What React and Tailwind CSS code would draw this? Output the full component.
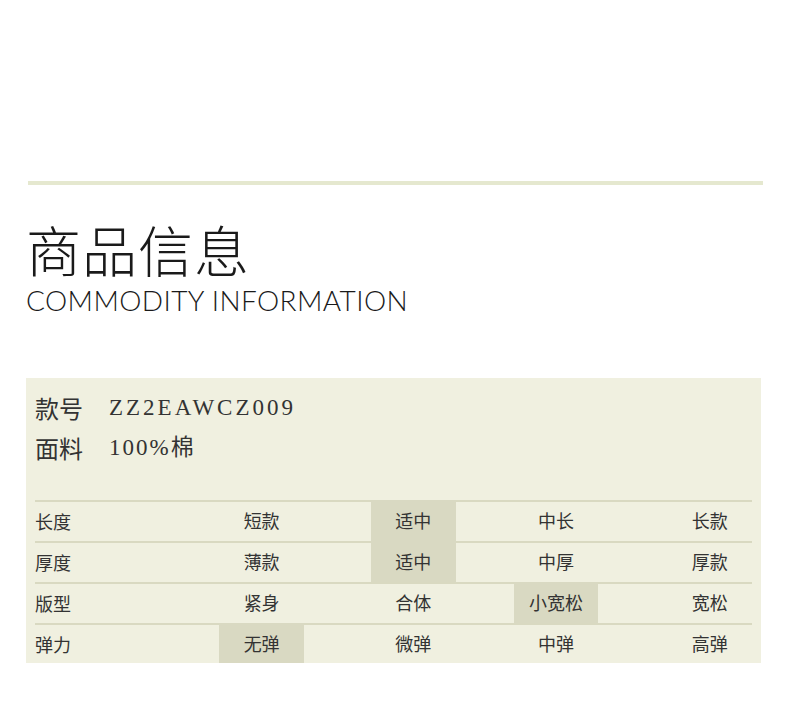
const rows = [
  { label: '长度', opts: ['短款', '适中', '中长', '长款'], pick: 1 },
  { label: '厚度', opts: ['薄款', '适中', '中厚', '厚款'], pick: 1 },
  { label: '版型', opts: ['紧身', '合体', '小宽松', '宽松'], pick: 2 },
  { label: '弹力', opts: ['无弹', '微弹', '中弹', '高弹'], pick: 0 },
];

const gaps = ['ml-0', 'ml-[67px]', 'ml-[58px]', 'ml-[69px]'];

function SizeRow({ row, last }) {
  return (
    <div className={`flex border-t-2 border-[#d9d9c1] ${last ? 'h-[40px]' : 'h-[41px]'}`}>
      <div className="w-[185px] flex items-center">{row.label}</div>
      {row.opts.map((o, i) => (
        <div
          key={o + i}
          className={`w-[85px] -mt-[2px] flex items-center justify-center ${gaps[i]} ${i === row.pick ? 'bg-[#d9d9c2]' : ''}`}
        >
          {o}
        </div>
      ))}
    </div>
  );
}

export default function App() {
  const cjk = { fontFamily: '"Noto Sans CJK SC", sans-serif' };
  const serif = { fontFamily: '"Liberation Serif", "Noto Sans CJK SC", serif' };
  return (
    <div className="w-[790px] h-[704px] bg-white text-[#333]" style={cjk}>
      <div className="pt-[181px] px-[28px]">
        <div className="h-[4px] w-[735px] bg-[#e5e8cf]" />
      </div>

      <div className="pl-[26px] mt-[33px]">
        <div className="text-[55px] leading-[60px] font-light text-[#1a1a1a] tracking-[1px]">商品信息</div>
        <div
          className="mt-[6px] text-[28px] leading-[32px] font-light text-[#1a1a1a] tracking-[0.4px]"
          style={{ fontFamily: 'Lato, sans-serif' }}
        >
          COMMODITY INFORMATION
        </div>
      </div>

      <div className="mt-[62px] ml-[26px] w-[735px] h-[285px] bg-[#f0f0e0] pl-[9px] pr-[9px]">
        <div className="pt-[10px] text-[24px] leading-[40px]">
          <div className="flex items-center">
            <span className="w-[74px]">款号</span>
            <span style={serif} className="text-[23px] tracking-[3px]">ZZ2EAWCZ009</span>
          </div>
          <div className="flex items-center">
            <span className="w-[74px]">面料</span>
            <span style={serif} className="text-[23px] tracking-[2px]">100%棉</span>
          </div>
        </div>
        <div className="mt-[32px] text-[18px]">
          {rows.map((r, i) => (
            <SizeRow key={r.label} row={r} last={i === rows.length - 1} />
          ))}
        </div>
      </div>
    </div>
  );
}
